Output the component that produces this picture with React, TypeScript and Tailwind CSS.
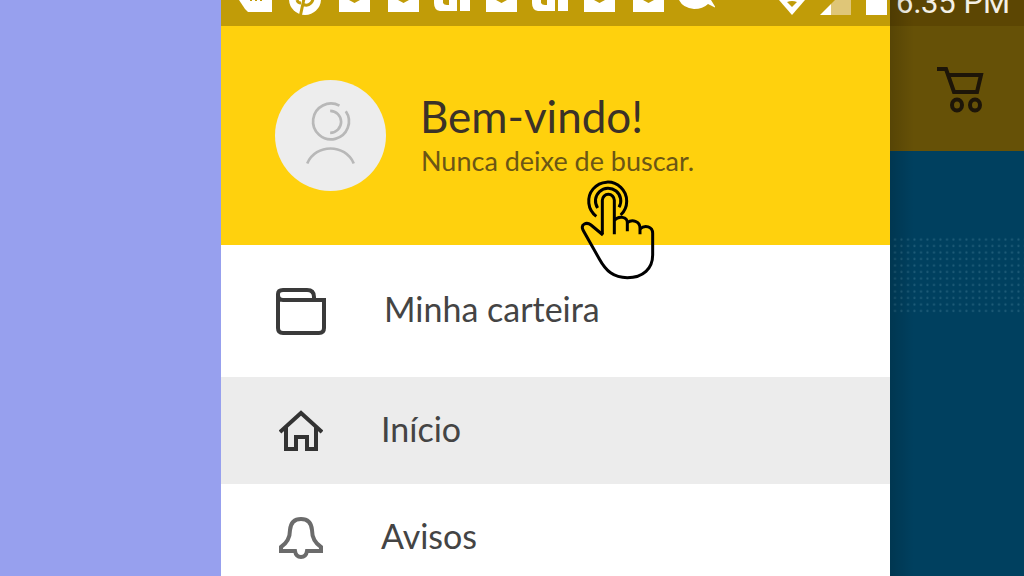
import type { ReactNode } from "react";

type Notification = "hand" | "pin" | "mail" | "news" | "chat";

const notifications: Notification[] = [
  "hand",
  "pin",
  "mail",
  "mail",
  "news",
  "mail",
  "news",
  "mail",
  "mail",
  "chat",
];

const glyphs: Record<Notification, ReactNode> = {
  hand: (
    <>
      <path fill="#fff" d="M1 0h33v12H10L7 9z" />
      <path stroke="#c19c08" strokeWidth="2" d="M13 0v1M18 0v1M23 0v1" />
    </>
  ),
  pin: (
    <>
      <circle cx="18" cy="-1" r="16" fill="#fff" />
      <path
        d="M18 -6L13.500 15M10 0q1 3 4 3M16 4q4 3 8 -1q2 -2 2 -5"
        fill="none"
        stroke="#c19c08"
        strokeWidth="3"
      />
    </>
  ),
  mail: (
    <>
      <path fill="#fff" d="M3 0h31v12H3z" />
      <path fill="#c19c08" d="M13 0h11l-5.500 3z" />
    </>
  ),
  news: (
    <path
      fill="#fff"
      fillRule="evenodd"
      d="M0 0h23v11H6Q0 10 0 3zM9 0v3q1 2 4 2h2V0zM26 0h10v11H26z"
    />
  ),
  chat: <path fill="#fff" d="M0 0h32l5 8l-8 -4Q24 9 15 9Q4 8 0 0z" />,
};

function StatusBar() {
  return (
    <div className="flex h-[26px] items-start bg-[#c19c08] pr-[3px] pl-[17px]">
      <div className="flex gap-[13px]">
        {notifications.map((name, i) => (
          <svg key={i} className="h-4 w-9 shrink-0" viewBox="0 0 36 16">
            {glyphs[name]}
          </svg>
        ))}
      </div>
      <div className="ml-auto flex gap-[15px]">
        <svg className="h-4 w-[26px]" viewBox="0 0 26 16">
          <path fill="#fff" d="M0 0h26L13 15z" />
          <path fill="#c19c08" d="M8 2q5 -2 10 0l-5 5z" />
        </svg>
        <svg className="h-4 w-[31px]" viewBox="0 0 31 16">
          <path fill="#dfc678" d="M15 0h16v15H11V4z" />
          <path fill="#fff" d="M0 15L11 4V15z" />
        </svg>
        <svg className="h-4 w-[21px]" viewBox="0 0 21 16">
          <path fill="#fff" d="M0 0h21v15H0z" />
        </svg>
      </div>
    </div>
  );
}

function Avatar() {
  return (
    <svg className="h-[111px] w-[111px] shrink-0" viewBox="43 30 334 334">
      <circle cx="210" cy="197" r="167" fill="#ededed" />
      <g fill="none" stroke="#b8b8b8" strokeWidth="8">
        <path d="M237 107A54 54 0 1 0 256 124" />
        <path d="M209 123A33 33 0 0 1 209 189" />
        <path d="M140 281C166 221 254 221 280 281" />
      </g>
    </svg>
  );
}

function TapHand() {
  return (
    <svg
      className="absolute top-[154px] left-[359px] z-10 h-[100px] w-[75px]"
      viewBox="30 30 225 300"
      fill="none"
      stroke="#000"
      strokeWidth="9"
    >
      <path d="M97 193V91a18 18 0 0 1 36 0V193" />
      <path d="M133 151C146 136 172 140 172 158V184" />
      <path d="M172 158C186 147 210 153 210 174V193" />
      <path d="M210 177C225 163 248 170 248 190V255C248 295 220 323 172 323C130 323 108 303 88 267L39 180C31 162 50 155 63 165L99 195" />
      <path d="M83 114A38 38 0 1 1 147 112" />
      <path d="M79 139A57 57 0 1 1 152 135" />
    </svg>
  );
}

function WalletIcon() {
  return (
    <svg
      className="h-[48px] w-[50px] shrink-0"
      viewBox="0 0 50 48"
      fill="none"
      stroke="#3a3a3a"
      strokeWidth="4"
    >
      <path d="M2 8V41Q2 46 7 46H43Q48 46 48 41V13H7Q2 13 2 8V7Q2 3 7 3H31Q38 3 38 10V13" />
    </svg>
  );
}

function HomeIcon() {
  return (
    <svg
      className="h-[42px] w-[44px] shrink-0"
      viewBox="0 0 44 42"
      fill="none"
      stroke="#333"
      strokeWidth="4"
    >
      <path d="M1 22L22 3L43 22M7 17V39H17V27H28V39H37V17" />
    </svg>
  );
}

function BellIcon() {
  return (
    <svg
      className="h-[42px] w-[44px] shrink-0"
      viewBox="0 0 44 42"
      fill="none"
      stroke="#6b6b6b"
      strokeWidth="4"
    >
      <path d="M2 34V30C8 26 11 21 11 13Q12 2 22 2Q32 2 33 13C33 21 36 26 42 30V34H28Q27 40 22 40Q17 40 16 34z" />
    </svg>
  );
}

function Header() {
  return (
    <header className="relative flex h-[219px] items-start bg-[#ffd10d] pt-[54px] pl-[54px]">
      <Avatar />
      <div className="pt-[10px] pl-[34px] whitespace-nowrap">
        <h1 className="text-[44px] leading-[52px] text-[#3b3228]">Bem-vindo!</h1>
        <p className="pl-px text-[27px] leading-[38px] text-[#6b5615]">
          Nunca deixe de buscar.
        </p>
      </div>
      <TapHand />
    </header>
  );
}

function Menu() {
  return (
    <nav className="text-[34px] leading-[44px] whitespace-nowrap text-[#444]">
      <a href="#carteira" className="flex h-[132px] items-center gap-[58px] pl-[55px]">
        <WalletIcon />
        <span className="pb-1">Minha carteira</span>
      </a>
      <a
        href="#inicio"
        aria-current="page"
        className="flex h-[107px] items-center gap-[58px] bg-[#ececec] pl-[58px]"
      >
        <HomeIcon />
        <span className="pb-1">Início</span>
      </a>
      <a href="#avisos" className="flex h-[107px] items-center gap-[58px] pl-[58px]">
        <BellIcon />
        <span className="pb-1">Avisos</span>
      </a>
    </nav>
  );
}

// Page behind the open drawer, darkened by the overlay
function Backdrop() {
  return (
    <div className="relative flex min-w-0 flex-col overflow-hidden bg-[#00405f]">
      <div className="flex h-[26px] items-end bg-[#5c4603] pl-[6px]">
        <span className="pb-2 font-[Roboto,sans-serif] text-[31px] leading-[30px] whitespace-nowrap text-[#f3f0e6]">
          6:35 PM
        </span>
      </div>
      <div className="flex h-[125px] items-start bg-[#665107] pt-10 pl-[47px]">
        <button aria-label="Carrinho">
          <svg
            className="h-[47px] w-[47px]"
            viewBox="0 0 47 47"
            fill="none"
            stroke="#1d1508"
            strokeWidth="4"
          >
            <path d="M0 3H9L17 26H40L44 9H12" />
            <ellipse cx="20" cy="39" rx="5" ry="5.500" />
            <ellipse cx="38" cy="39" rx="5" ry="5.500" />
          </svg>
        </button>
      </div>
      <svg className="mt-[85px] h-[78px] w-full">
        <defs>
          <pattern id="dots" width="6.500" height="6.500" patternUnits="userSpaceOnUse">
            <circle cx="5" cy="3.500" r="1.100" fill="#1f5c78" />
          </pattern>
        </defs>
        <rect width="100%" height="100%" fill="url(#dots)" />
      </svg>
      <div className="absolute inset-y-0 left-0 w-6 bg-linear-to-r from-black/15 to-transparent" />
    </div>
  );
}

export default function App() {
  return (
    <div className="grid h-screen grid-cols-[minmax(0,221fr)_minmax(0,669fr)_minmax(0,134fr)] overflow-hidden bg-[#97a0ee] font-[Lato,sans-serif]">
      <div />
      <aside className="min-w-0 overflow-hidden bg-white">
        <StatusBar />
        <Header />
        <Menu />
      </aside>
      <Backdrop />
    </div>
  );
}
